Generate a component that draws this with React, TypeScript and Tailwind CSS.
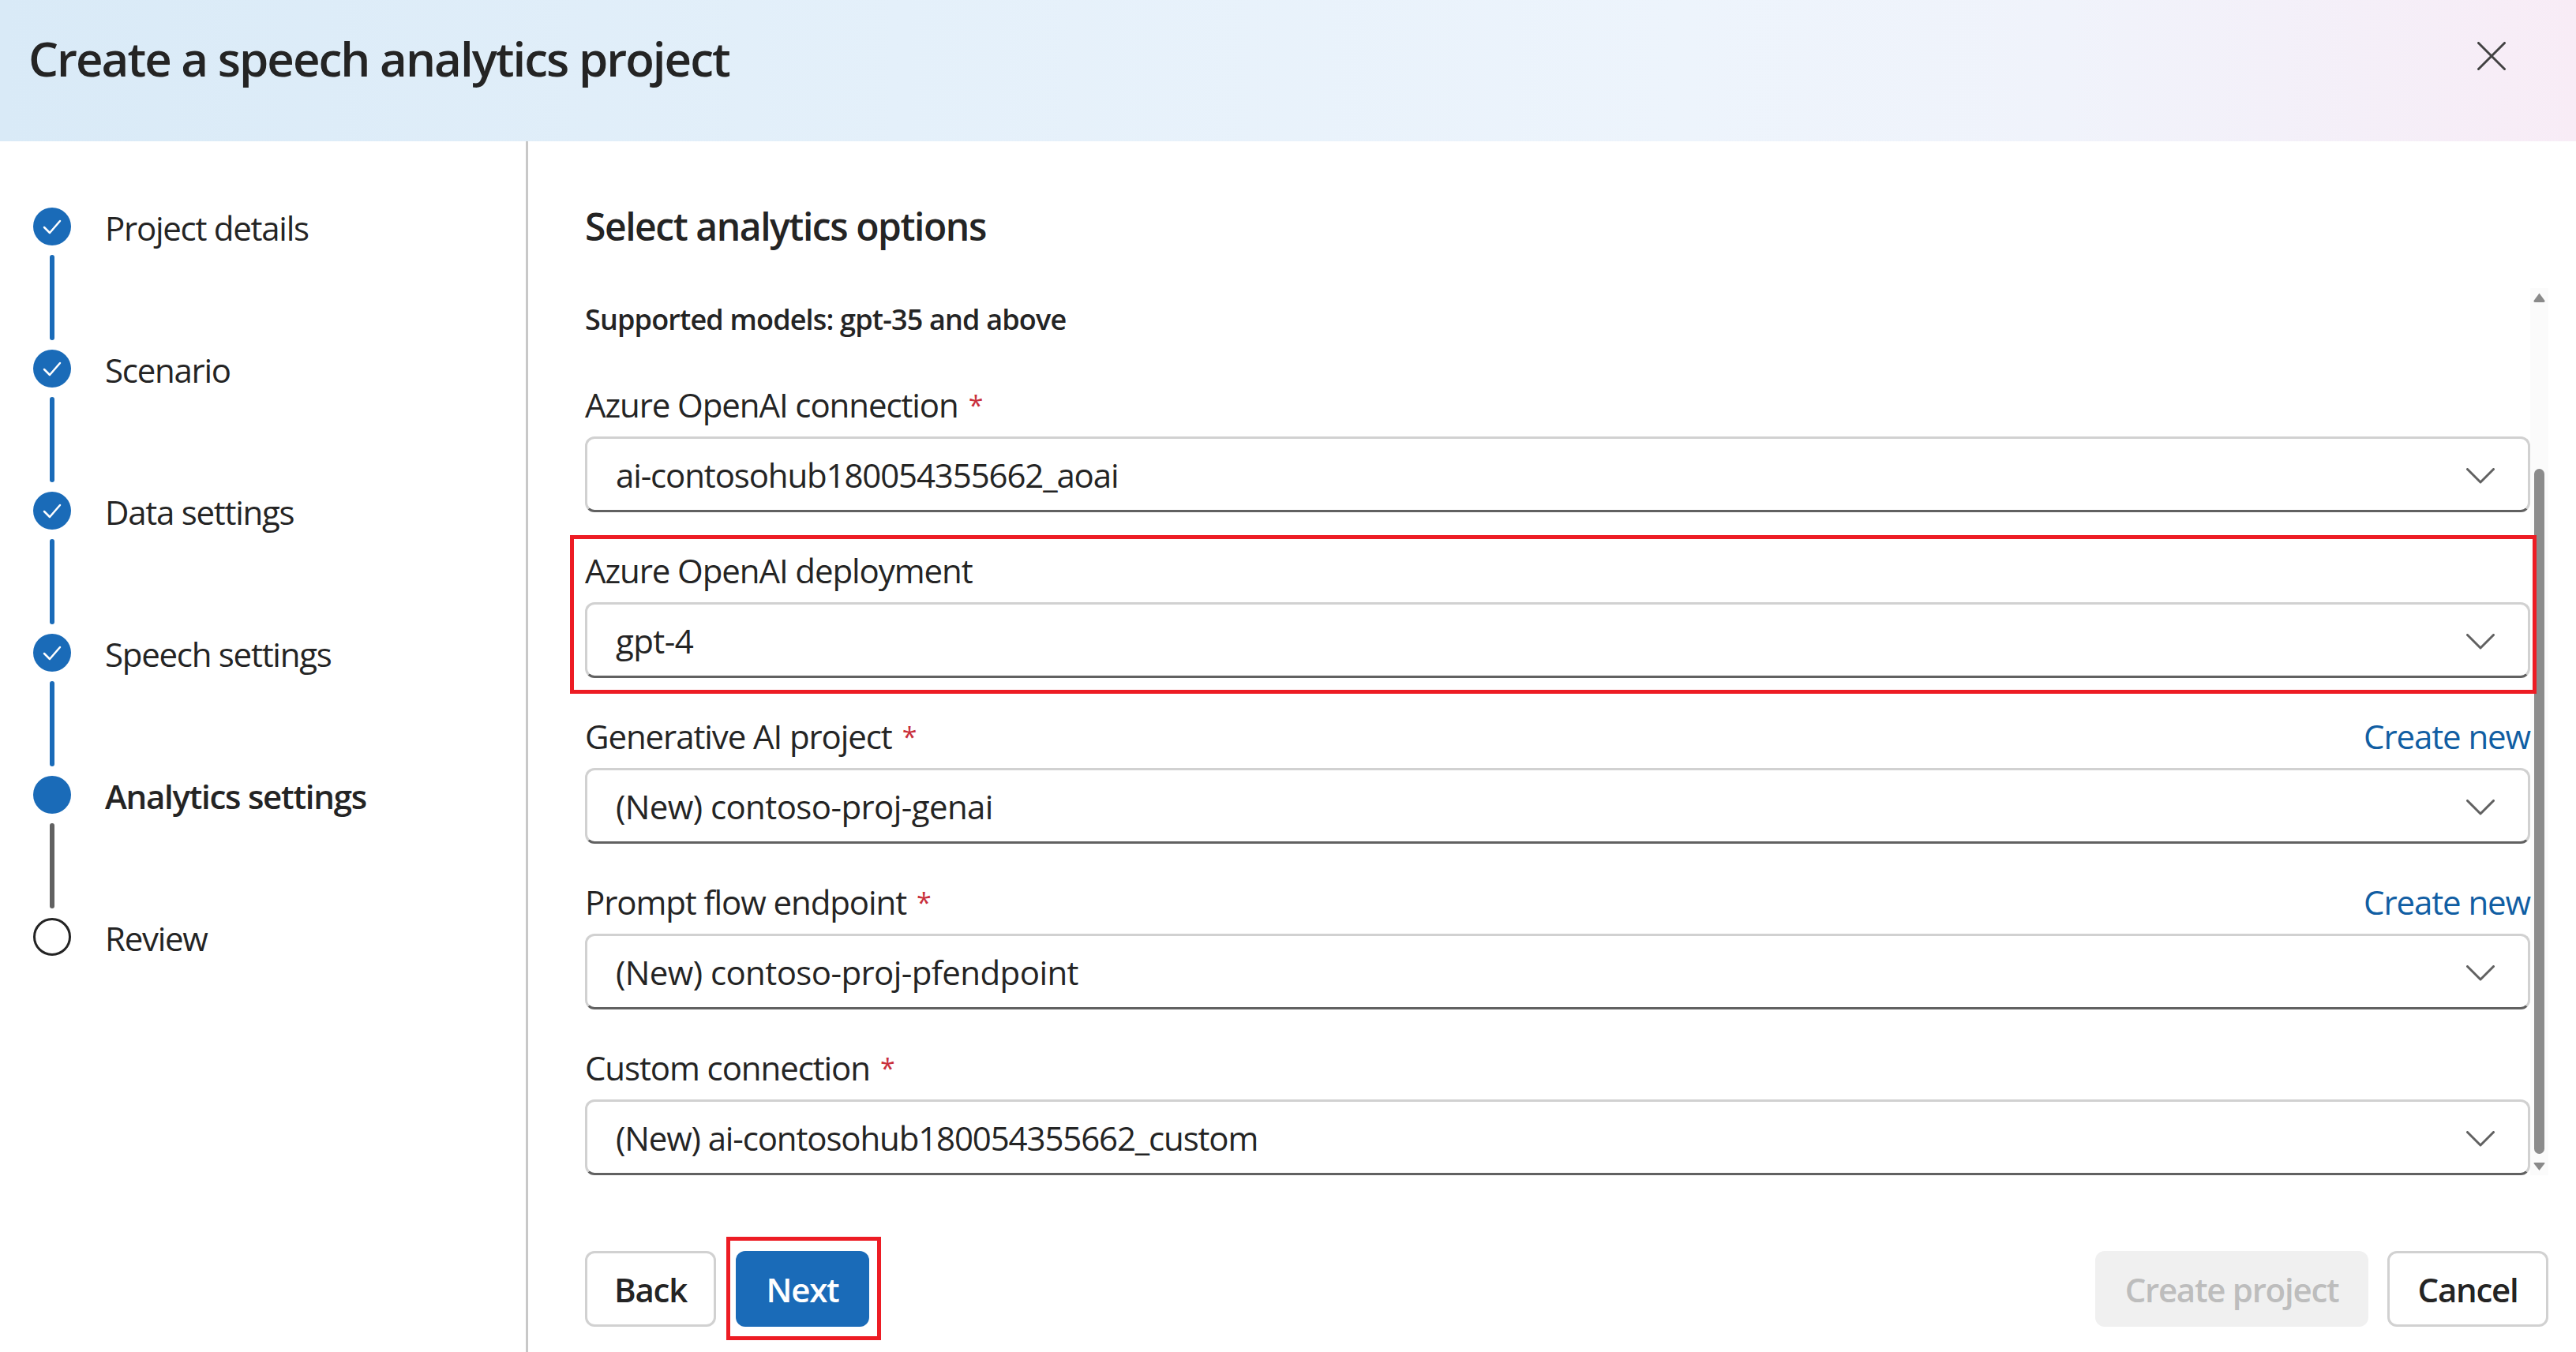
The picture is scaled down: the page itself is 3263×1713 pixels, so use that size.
type Step = { label: string; state: "done" | "current" | "todo" };

const steps: Step[] = [
  { label: "Project details", state: "done" },
  { label: "Scenario", state: "done" },
  { label: "Data settings", state: "done" },
  { label: "Speech settings", state: "done" },
  { label: "Analytics settings", state: "current" },
  { label: "Review", state: "todo" },
];

function StepRow({ step, last }: { step: Step; last: boolean }) {
  return (
    <div className="flex gap-[43px]">
      <div className="flex w-[48px] flex-col items-center">
        {step.state === "todo" ? (
          <div className="size-[48px] rounded-full border-[3px] border-[#242424]" />
        ) : (
          <div className="size-[48px] rounded-full bg-[#1a6bb8]">
            {step.state === "done" && (
              <svg viewBox="0 0 48 48" className="size-[48px]" fill="none">
                <path d="M14 25 L21 32 L34 17" stroke="#fff" strokeWidth="2.5" strokeLinecap="round" strokeLinejoin="round" />
              </svg>
            )}
          </div>
        )}
        {!last && (
          <div
            className={`my-[12px] h-[108px] w-[6px] rounded-full ${
              step.state === "done" ? "bg-[#1a6bb8]" : "bg-[#616161]"
            }`}
          />
        )}
      </div>
      <span
        className={`h-[48px] text-[42px] leading-[52px] tracking-[-0.03em] text-[#242424] ${
          step.state === "current" ? "font-semibold" : ""
        }`}
      >
        {step.label}
      </span>
    </div>
  );
}

function Select({ value, digits }: { value: string; digits?: boolean }) {
  return (
    <div className="flex h-[96px] items-center justify-between rounded-[12px] border-[3px] border-[#d1d1d1] border-b-[#616161] bg-white pl-[36px] pr-[42px]">
      <span className={`text-[42px] text-[#242424] ${digits ? "tracking-[-0.027em]" : "tracking-[-0.014em]"}`}>
        {value}
      </span>
      <svg viewBox="0 0 36 20" className="mt-[4px] h-[20px] w-[36px]" fill="none">
        <path d="M1.5 1.5 L18 18 L34.5 1.5" stroke="#616161" strokeWidth="3" strokeLinecap="round" strokeLinejoin="round" />
      </svg>
    </div>
  );
}

function Field({
  label,
  value,
  required,
  createNew,
  highlighted,
  digits,
}: {
  label: string;
  value: string;
  required?: boolean;
  createNew?: boolean;
  highlighted?: boolean;
  digits?: boolean;
}) {
  return (
    <div className="relative flex flex-col gap-[8px]">
      <div className="flex h-[60px] items-center justify-between pb-[4px] text-[42px] leading-[56px] tracking-[-0.026em] text-[#242424]">
        <span>
          {label}
          {required && <span className="ml-[13px] align-[3px] text-[34px] text-[#c9303c]">*</span>}
        </span>
        {createNew && <span className="text-[#115ea3]">Create new</span>}
      </div>
      <Select value={value} digits={digits} />
      {highlighted && (
        <div className="absolute -top-[17px] -right-[8px] -bottom-[20px] -left-[19px] z-10 border-[5px] border-[#ed1c24]" />
      )}
    </div>
  );
}

function Scrollbar() {
  return (
    <div className="flex h-[1124px] w-[23px] shrink-0 flex-col items-center bg-[#fbfbfb] pt-[6px]">
      <svg viewBox="0 0 15 12" className="h-[12px] w-[15px]">
        <path d="M7.5 0.5 L14.5 10 Q15 12 13 12 L2 12 Q0 12 0.5 10 Z" fill="#8a8a8a" />
      </svg>
      <div className="mt-[211px] h-[868px] w-[13px] rounded-full bg-[#8c8c8c]" />
      <svg viewBox="0 0 15 10" className="mt-[11px] h-[10px] w-[15px]">
        <path d="M0.5 1 Q0 0 2 0 L13 0 Q15 0 14.5 1 L7.5 10 Z" fill="#8a8a8a" />
      </svg>
    </div>
  );
}

export default function App() {
  return (
    <div className="flex h-[1713px] w-[3263px] flex-col overflow-hidden bg-white font-['Open_Sans','Liberation_Sans',sans-serif]">
      <header className="flex h-[179px] shrink-0 items-start justify-between bg-[linear-gradient(90deg,#d9eaf7_0%,#e4f0fa_35%,#edf4fc_65%,#f0f3fb_80%,#f8ecf6_100%)] pl-[36px] pr-[89px] pt-[51px]">
        <h1 className="text-[60px] leading-[46px] font-semibold tracking-[-0.033em] text-[#242424]">
          Create a speech analytics project
        </h1>
        <svg viewBox="0 0 36 36" className="mt-[2px] size-[36px]" fill="none">
          <path d="M1.5 1.5 L34.5 34.5 M34.5 1.5 L1.5 34.5" stroke="#424242" strokeWidth="3" strokeLinecap="round" />
        </svg>
      </header>

      <div className="flex min-h-0 flex-1">
        <aside className="w-[669px] shrink-0 border-r-[3px] border-[#c8c8c8] pl-[42px] pt-[84px]">
          {steps.map((step, i) => (
            <StepRow key={step.label} step={step} last={i === steps.length - 1} />
          ))}
        </aside>

        <main className="flex min-w-0 flex-1 flex-col pl-[72px] pr-[35px] pt-[80px]">
          <h2 className="h-[106px] text-[48px] leading-[56px] font-semibold tracking-[-0.03em] text-[#242424]">
            Select analytics options
          </h2>
          <div className="flex">
            <div className="w-[2464px] shrink-0">
              <p className="h-[82px] pt-[16px] text-[36px] leading-[48px] font-semibold tracking-[-0.023em] text-[#242424]">
                Supported models: gpt-35 and above
              </p>
              <div className="flex flex-col gap-[46px] pt-[38px]">
                <Field label="Azure OpenAI connection" required digits value="ai-contosohub180054355662_aoai" />
                <Field label="Azure OpenAI deployment" value="gpt-4" highlighted />
                <Field label="Generative AI project" required createNew value="(New) contoso-proj-genai" />
                <Field label="Prompt flow endpoint" required createNew value="(New) contoso-proj-pfendpoint" />
                <Field label="Custom connection" required digits value="(New) ai-contosohub180054355662_custom" />
              </div>
            </div>
            <Scrollbar />
          </div>

          <footer className="mt-[96px] flex items-center justify-between text-[42px] font-semibold tracking-[-0.03em]">
            <div className="flex gap-[25px]">
              <button className="h-[96px] w-[166px] rounded-[12px] border-[3px] border-[#d1d1d1] bg-white text-[#242424]">
                Back
              </button>
              <div className="relative">
                <button className="h-[96px] w-[169px] rounded-[12px] bg-[#1a6bb8] text-white">Next</button>
                <div className="absolute -top-[18px] -right-[15px] -bottom-[17px] -left-[12px] border-[5px] border-[#ed1c24]" />
              </div>
            </div>
            <div className="flex gap-[24px]">
              <button className="h-[96px] w-[346px] rounded-[12px] bg-[#f0f0f0] text-[#bdbdbd]">Create project</button>
              <button className="h-[96px] w-[204px] rounded-[12px] border-[3px] border-[#d1d1d1] bg-white text-[#242424]">
                Cancel
              </button>
            </div>
          </footer>
        </main>
      </div>
    </div>
  );
}
